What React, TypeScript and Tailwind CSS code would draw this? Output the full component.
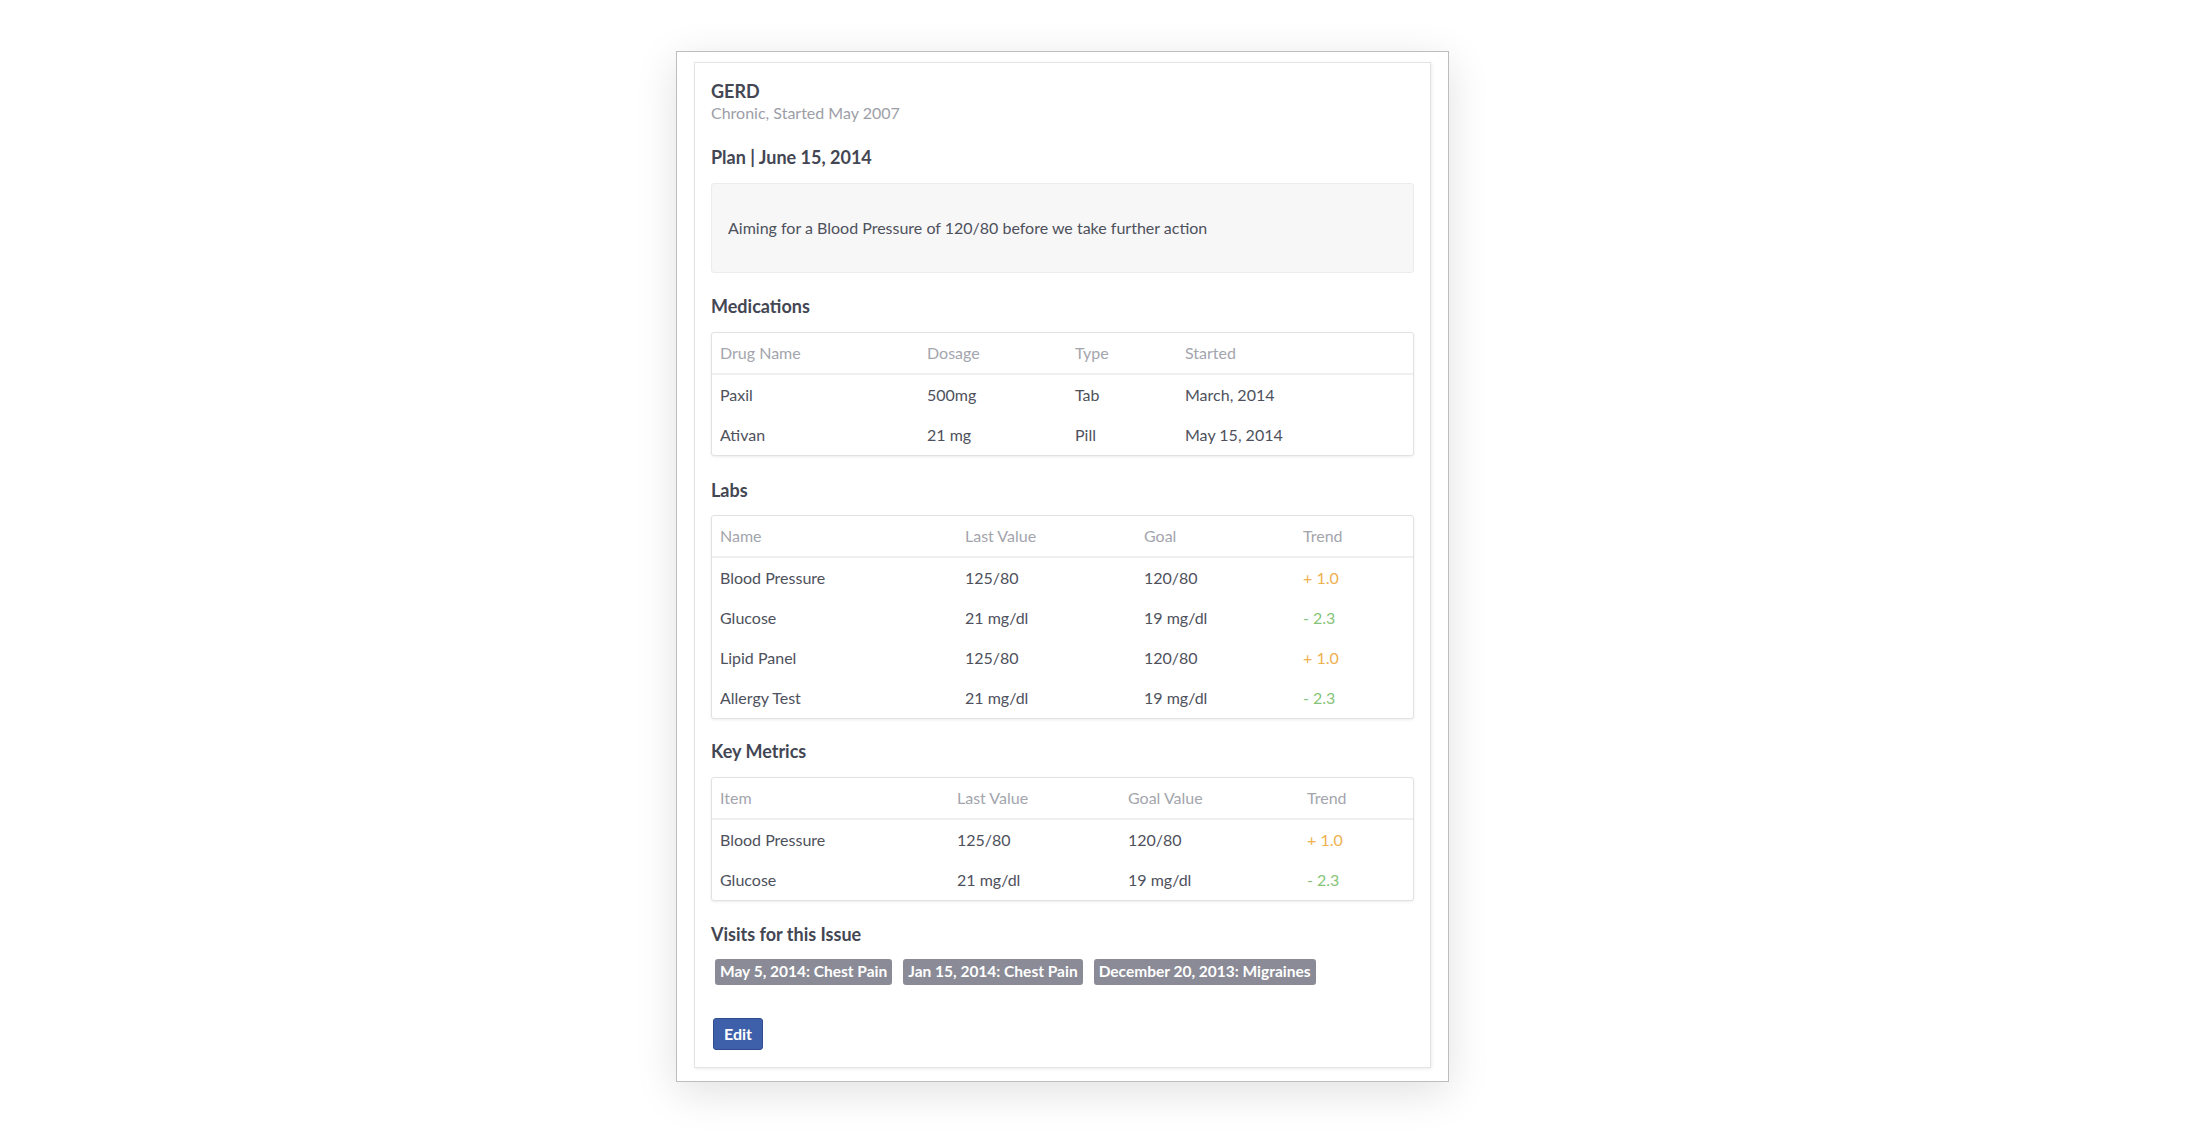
type Row = { cells: string[]; trend?: "up" | "down" };

interface DataTableProps {
  cols: string;
  head: string[];
  rows: Row[];
}

function DataTable({ cols, head, rows }: DataTableProps) {
  return (
    <div className="w-full border border-[#e2e2e4] rounded-[3px] bg-white shadow-[0_1px_3px_rgba(0,0,0,0.08)]">
      <div className={`grid ${cols} border-b-2 border-[#efeff1]`}>
        {head.map((h) => (
          <div key={h} className="pl-2 py-[10px] text-[16px] leading-5 text-[#a3a5ad]">
            {h}
          </div>
        ))}
      </div>
      {rows.map((r, i) => (
        <div key={i} className={`grid ${cols}`}>
          {r.cells.map((c, j) => {
            const isTrend = r.trend && j === r.cells.length - 1;
            const color = !isTrend ? "text-[#4e515c]" : r.trend === "up" ? "text-[#eeb14e]" : "text-[#86c479]";
            return (
              <div key={j} className={`pl-2 py-[10px] text-[16px] leading-5 ${color}`}>
                {c}
              </div>
            );
          })}
        </div>
      ))}
    </div>
  );
}

function Heading({ children }: { children: React.ReactNode }) {
  return <h3 className="text-[18px] leading-6 font-bold text-[#434653]">{children}</h3>;
}

export default function App() {
  const meds: Row[] = [
    { cells: ["Paxil", "500mg", "Tab", "March, 2014"] },
    { cells: ["Ativan", "21 mg", "Pill", "May 15, 2014"] },
  ];
  const labs: Row[] = [
    { cells: ["Blood Pressure", "125/80", "120/80", "+ 1.0"], trend: "up" },
    { cells: ["Glucose", "21 mg/dl", "19 mg/dl", "- 2.3"], trend: "down" },
    { cells: ["Lipid Panel", "125/80", "120/80", "+ 1.0"], trend: "up" },
    { cells: ["Allergy Test", "21 mg/dl", "19 mg/dl", "- 2.3"], trend: "down" },
  ];
  const metrics: Row[] = [
    { cells: ["Blood Pressure", "125/80", "120/80", "+ 1.0"], trend: "up" },
    { cells: ["Glucose", "21 mg/dl", "19 mg/dl", "- 2.3"], trend: "down" },
  ];
  const visits = ["May 5, 2014: Chest Pain", "Jan 15, 2014: Chest Pain", "December 20, 2013: Migraines"];

  return (
    <div className="min-h-[1142px] bg-white pl-[676px] pt-[51px] font-['Lato',sans-serif]">
      <div className="w-[773px] border border-[#bdbdbd] bg-white pt-[10px] pl-[17px] pr-[17px] pb-[13px] shadow-[0_10px_40px_rgba(0,0,0,0.12)]">
        <div className="border border-[#e4e4e4] bg-white shadow-[1px_1px_3px_rgba(0,0,0,0.08)] px-4 pt-[17px] pb-[17px]">
          <div className="text-[18px] leading-[22px] font-bold text-[#434653]">GERD</div>
          <div className="text-[16px] leading-5 text-[#9c9ea7] mt-[1px]">Chronic, Started May 2007</div>

          <div className="mt-[22px]">
            <h2 className="text-[18px] leading-6 font-bold text-[#434653]">Plan | June 15, 2014</h2>
            <div className="mt-[14px] h-[90px] flex items-center px-4 bg-[#f7f7f8] border border-[#ececee] rounded-[3px]">
              <p className="text-[16px] text-[#4e515c]">Aiming for a Blood Pressure of 120/80 before we take further action</p>
            </div>
          </div>

          <div className="mt-[21px]">
            <Heading>Medications</Heading>
            <div className="mt-[14px]">
              <DataTable cols="grid-cols-[207px_148px_110px_1fr]" head={["Drug Name", "Dosage", "Type", "Started"]} rows={meds} />
            </div>
          </div>

          <div className="mt-[22px]">
            <Heading>Labs</Heading>
            <div className="mt-[13px]">
              <DataTable cols="grid-cols-[245px_179px_159px_1fr]" head={["Name", "Last Value", "Goal", "Trend"]} rows={labs} />
            </div>
          </div>

          <div className="mt-[20px]">
            <Heading>Key Metrics</Heading>
            <div className="mt-[14px]">
              <DataTable cols="grid-cols-[237px_171px_179px_1fr]" head={["Item", "Last Value", "Goal Value", "Trend"]} rows={metrics} />
            </div>
          </div>

          <div className="mt-[21px]">
            <Heading>Visits for this Issue</Heading>
            <div className="mt-[13px] ml-[4px] flex gap-[11px]">
              {visits.map((v) => (
                <span key={v} className="h-[26px] px-[5px] flex items-center rounded-[3px] bg-[#8a8b96] text-white font-bold text-[15.5px]">
                  {v}
                </span>
              ))}
            </div>
          </div>

          <button className="mt-[33px] ml-[2px] h-[32px] px-[10px] rounded-[3px] bg-[#3e5fa9] border border-[#2f4d8e] text-white font-bold text-[16px]">
            Edit
          </button>
        </div>
      </div>
    </div>
  );
}
